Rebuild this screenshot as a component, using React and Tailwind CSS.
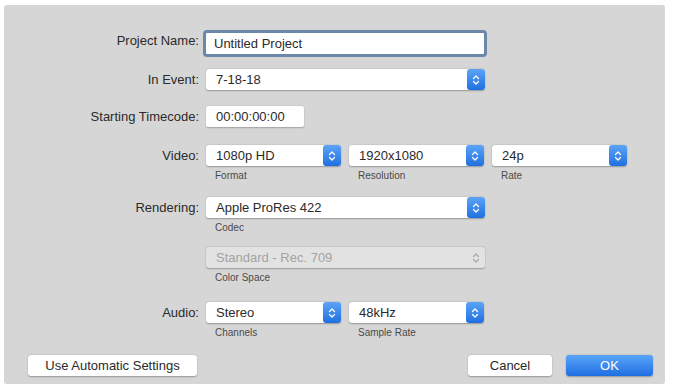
import React from "react";

const font = { fontFamily: '"Liberation Sans", Arial, sans-serif' };

function Stepper({ disabled }) {
  return (
    <div
      className={
        disabled
          ? "flex h-full w-[18px] items-center justify-center"
          : "flex h-full w-[18px] items-center justify-center rounded-[3px] bg-gradient-to-b from-[#5ba4f7] to-[#1f6fe0]"
      }
    >
      <svg width="8" height="12" viewBox="0 0 8 12" fill="none">
        <path d="M1.5 4.5 L4 2 L6.5 4.5" stroke={disabled ? "#a8a8a8" : "#fff"} strokeWidth="1.3" strokeLinecap="round" strokeLinejoin="round" />
        <path d="M1.5 7.5 L4 10 L6.5 7.5" stroke={disabled ? "#a8a8a8" : "#fff"} strokeWidth="1.3" strokeLinecap="round" strokeLinejoin="round" />
      </svg>
    </div>
  );
}

function Popup({ value, width, disabled }) {
  return (
    <div
      className={
        "flex h-[21px] items-center justify-between rounded-[3px] shadow-[0_0.5px_1.5px_rgba(0,0,0,0.3)] " +
        (disabled ? "bg-[#e2e2e2] text-[#a3a3a3]" : "bg-white text-[#2a2a2a]")
      }
      style={{ width }}
    >
      <span className="pl-[10px] text-[13px]">{value}</span>
      <Stepper disabled={disabled} />
    </div>
  );
}

function Field({ value, sub, width, disabled }) {
  return (
    <div className="flex flex-col">
      <Popup value={value} width={width} disabled={disabled} />
      {sub && <span className="mt-[3px] pl-[9px] text-[10px] leading-[14px] text-[#4a4a4a]">{sub}</span>}
    </div>
  );
}

function Row({ label, children, className }) {
  return (
    <div className={"flex items-start " + (className || "")}>
      <div className="w-[202px] pr-[7px] text-right text-[13px] leading-[21px] text-[#2a2a2a]">{label}</div>
      <div className="flex gap-[8px]">{children}</div>
    </div>
  );
}

export default function App() {
  return (
    <div className="h-[387px] w-[673px] bg-white pb-[3px] pl-[4px] pr-[8px] pt-[5px]" style={font}>
      <div className="flex h-full flex-col rounded-[3px] bg-[#d6d6d6] pt-[25px]">
        <Row label="Project Name:" className="h-[26px]">
          <div className="-ml-[3px] flex h-[27px] w-[284px] items-center rounded-[4px] border-[3px] border-[#6b88ab] bg-white pl-[8px] text-[13px] text-[#2a2a2a]">
            Untitled Project
          </div>
        </Row>
        <Row label="In Event:" className="mt-[13px]">
          <Field value="7-18-18" width={279} />
        </Row>
        <Row label="Starting Timecode:" className="mt-[16px]">
          <div className="flex h-[21px] w-[98px] items-center rounded-[2px] bg-white pl-[10px] text-[13px] text-[#2a2a2a] shadow-[0_0.5px_1.5px_rgba(0,0,0,0.25)]">
            00:00:00:00
          </div>
        </Row>
        <Row label="Video:" className="mt-[18px]">
          <Field value="1080p HD" sub="Format" width={135} />
          <Field value="1920x1080" sub="Resolution" width={135} />
          <Field value="24p" sub="Rate" width={135} />
        </Row>
        <Row label="Rendering:" className="mt-[14px]">
          <Field value="Apple ProRes 422" sub="Codec" width={279} />
        </Row>
        <Row label="" className="mt-[12px]">
          <Field value="Standard - Rec. 709" sub="Color Space" width={279} disabled />
        </Row>
        <Row label="Audio:" className="mt-[17px]">
          <Field value="Stereo" sub="Channels" width={135} />
          <Field value="48kHz" sub="Sample Rate" width={135} />
        </Row>
        <div className="mt-[15px] flex items-center pl-[24px] pr-[12px]">
          <button className="h-[21px] w-[169px] rounded-[3px] bg-white text-[13px] text-[#2a2a2a] shadow-[0_0.5px_1.5px_rgba(0,0,0,0.3)]">
            Use Automatic Settings
          </button>
          <div className="ml-auto flex gap-[14px]">
            <button className="h-[21px] w-[84px] rounded-[3px] bg-white text-[13px] text-[#2a2a2a] shadow-[0_0.5px_1.5px_rgba(0,0,0,0.3)]">
              Cancel
            </button>
            <button className="h-[21px] w-[87px] rounded-[3px] bg-gradient-to-b from-[#5aa5f8] to-[#1d6ee2] text-[13px] text-white shadow-[0_0.5px_1.5px_rgba(0,0,0,0.3)]">
              OK
            </button>
          </div>
        </div>
      </div>
    </div>
  );
}
